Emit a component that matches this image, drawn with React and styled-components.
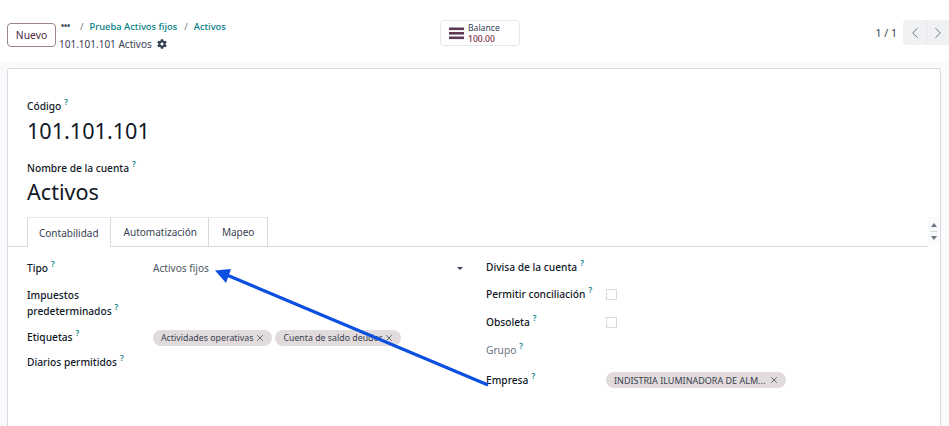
import React from "react";
import styled, { createGlobalStyle } from "styled-components";
import { ChevronLeft, ChevronRight, X } from "lucide-react";
import { FaCog } from "react-icons/fa";

const GlobalStyle = createGlobalStyle`
  html, body {
    margin: 0;
    height: 100%;
    overflow: hidden;
    background: #f9fafb;
    font-family: "Noto Sans", "Open Sans", sans-serif;
    color: #374151;
  }
`;

const Page = styled.div`
  position: relative;
  width: 949px;
  height: 426px;
  overflow: hidden;
`;

const ControlPanel = styled.div`
  height: 62px;
  box-sizing: border-box;
  background: #fff;
  display: grid;
  grid-template-columns: 433px 1fr auto;
  padding-left: 7px;
`;

const LeftSide = styled.div`
  display: flex;
  align-items: flex-start;
  padding-top: 18px;
`;

const NewButton = styled.button`
  width: 49px;
  height: 24px;
  margin-top: 5px;
  padding: 0;
  background: #fff;
  border: 1px solid #9a8494;
  border-radius: 4px;
  color: #4b2a43;
  font: 10.3px "Noto Sans", sans-serif;
`;

const Crumbs = styled.div`
  margin-left: 3px;
  display: flex;
  flex-direction: column;
`;

const CrumbRow = styled.div`
  height: 17px;
  display: flex;
  align-items: center;
  font-size: 9.4px;
  font-weight: 500;
  color: #017e84;
  padding-left: 2px;
`;

const Dots = styled.span`
  color: #374151;
  font-weight: 700;
  font-size: 8px;
  line-height: 1;
  width: 19px;
  margin-top: -2px;
`;

const Slash = styled.span`
  color: #6b7280;
  font-weight: 400;
  margin-right: 6px;
`;

const CrumbLink = styled.span`
  margin-right: 7px;
`;

const CurrentRow = styled.div`
  height: 17px;
  display: flex;
  align-items: center;
  gap: 5px;
  font-size: 10px;
  color: #374151;
`;

const StatWrap = styled.div`
  padding-top: 20px;
`;

const StatButton = styled.div`
  width: 80px;
  height: 26px;
  box-sizing: border-box;
  border: 1px solid #e5e7eb;
  border-radius: 4px;
  display: flex;
  align-items: center;
  padding-left: 8px;
  gap: 4px;
`;

const StatText = styled.div`
  display: flex;
  flex-direction: column;
  padding-top: 1px;
  font-size: 8.6px;
  line-height: 10.5px;
  color: #374151;
`;

const StatValue = styled.span`
  color: #7c2d3f;
  font-weight: 500;
`;

const Pager = styled.div`
  padding-top: 20px;
  display: flex;
  align-items: flex-start;
  font-size: 10.5px;
  color: #374151;
`;

const PagerText = styled.span`
  margin: 6px 6px 0 0;
`;

const PagerButton = styled.div`
  width: ${(p) => p.$w}px;
  height: 25px;
  background: #eff1f3;
  border-left: ${(p) => (p.$split ? "1px solid #e5e7eb" : "0")};
  border-radius: ${(p) => (p.$split ? "0" : "4px 0 0 4px")};
  display: flex;
  align-items: center;
  justify-content: center;
  color: #6b7280;
`;

const Sheet = styled.div`
  box-sizing: border-box;
  margin: 6px 8px 0 7px;
  height: 358px;
  background: #fff;
  border: 1px solid #d8dadd;
  border-bottom: 0;
  border-radius: 3px 3px 0 0;
  padding-top: 29px;
`;

const TitleBlock = styled.div`
  padding: 0 19px;
  height: ${(p) => p.$h}px;
`;

const Label = styled.div`
  font-size: 10.2px;
  line-height: 16px;
  font-weight: ${(p) => (p.$muted ? 400 : 500)};
  color: ${(p) => (p.$muted ? "#6b7280" : "#111827")};
`;

const Help = styled.sup`
  color: #017e84;
  font-size: 8px;
  font-weight: 600;
  line-height: 0;
  margin-left: 3px;
  vertical-align: 5px;
`;

const BigValue = styled.div`
  font-size: 21.6px;
  line-height: 31px;
  margin-top: ${(p) => p.$top || 0}px;
  color: #111827;
`;

const TabBar = styled.div`
  position: relative;
  height: 30px;
  box-sizing: border-box;
  padding-left: 19px;
  display: flex;
  border-bottom: 1px solid #d8dadd;
  margin-right: 12px;
`;

const Tab = styled.div`
  box-sizing: border-box;
  height: ${(p) => (p.$active ? "30px" : "29px")};
  padding: 0 ${(p) => p.$right}px 0 ${(p) => p.$left}px;
  display: flex;
  align-items: center;
  font-size: 10px;
  background: #fff;
  color: #374151;
  border-top: 1px solid #e5e7eb;
  border-right: 1px solid #d8dadd;
  border-left: ${(p) => (p.$active ? "1px solid #d8dadd" : "0")};
`;

const Scroller = styled.div`
  position: absolute;
  right: -11px;
  top: 0;
  width: 11px;
  height: 28px;
  display: flex;
  flex-direction: column;
  align-items: center;
  justify-content: center;
  gap: 4px;
  background: #f9fafb;
`;

const ScrollerRule = styled.span`
  width: 7px;
  height: 1px;
  background: #d8dadd;
`;

const Arrowhead = styled.span`
  width: 0;
  height: 0;
  border-left: 3px solid transparent;
  border-right: 3px solid transparent;
  border-${(p) => (p.$up ? "bottom" : "top")}: 4px solid #6b7280;
`;

const FormGrid = styled.div`
  display: grid;
  grid-template-columns: 459px 1fr;
  padding: 13px 0 0 19px;
`;

const Column = styled.div`
  display: flex;
  flex-direction: column;
  margin-top: ${(p) => p.$top || 0}px;
`;

const Row = styled.div`
  display: grid;
  grid-template-columns: ${(p) => p.$label}px 1fr;
  min-height: ${(p) => p.$h}px;
  align-items: start;
`;

const Select = styled.div`
  width: 312px;
  display: flex;
  justify-content: space-between;
  align-items: center;
  font-size: 10.1px;
  line-height: 16px;
  color: #4b5563;
`;

const Caret = styled.span`
  width: 0;
  height: 0;
  border-left: 3px solid transparent;
  border-right: 3px solid transparent;
  border-top: 3px solid #374151;
  margin-right: 2px;
`;

const Tags = styled.div`
  display: flex;
  gap: 3px;
  margin-top: ${(p) => p.$top}px;
`;

const Tag = styled.span`
  height: 16px;
  padding: 0 ${(p) => (p.$wide ? 7 : 7)}px 0 8px;
  background: #e2dbdb;
  border-radius: 8px;
  display: inline-flex;
  align-items: center;
  gap: ${(p) => (p.$wide ? 4 : 2)}px;
  font-size: ${(p) => (p.$wide ? 9 : 8.8)}px;
  color: #374151;
  white-space: nowrap;
`;

const Checkbox = styled.span`
  display: block;
  width: 9px;
  height: 9px;
  margin-top: 3px;
  border: 1px solid #d8dadd;
`;

const ArrowLayer = styled.svg`
  position: absolute;
  left: 0;
  top: 0;
  pointer-events: none;
`;

const HamburgerIcon = () => (
  <svg width="15" height="13" viewBox="0 0 15 13">
    <rect x="0" y="0.5" width="15" height="2.6" fill="#5f3a58" />
    <rect x="0" y="5" width="15" height="2.6" fill="#5f3a58" />
    <rect x="0" y="9.5" width="15" height="2.6" fill="#5f3a58" />
  </svg>
);

const Field = ({ children, muted }) => (
  <Label $muted={muted}>
    {children}
    <Help>?</Help>
  </Label>
);

const Chip = ({ children, wide }) => (
  <Tag $wide={wide}>
    {children}
    <X size={10} strokeWidth={2} color="#4b5563" />
  </Tag>
);

export default function App() {
  return (
    <Page>
      <GlobalStyle />
      <ControlPanel>
        <LeftSide>
          <NewButton>Nuevo</NewButton>
          <Crumbs>
            <CrumbRow>
              <Dots>•••</Dots>
              <Slash>/</Slash>
              <CrumbLink>Prueba Activos fijos</CrumbLink>
              <Slash>/</Slash>
              <CrumbLink>Activos</CrumbLink>
            </CrumbRow>
            <CurrentRow>
              101.101.101 Activos
              <FaCog size={10} color="#374151" />
            </CurrentRow>
          </Crumbs>
        </LeftSide>
        <StatWrap>
          <StatButton>
            <HamburgerIcon />
            <StatText>
              <span>Balance</span>
              <StatValue>100.00</StatValue>
            </StatText>
          </StatButton>
        </StatWrap>
        <Pager>
          <PagerText>1 / 1</PagerText>
          <PagerButton $w={23}>
            <ChevronLeft size={18} strokeWidth={1.3} />
          </PagerButton>
          <PagerButton $w={22} $split>
            <ChevronRight size={18} strokeWidth={1.3} />
          </PagerButton>
        </Pager>
      </ControlPanel>
      <Sheet>
        <TitleBlock $h={62}>
          <Field>Código</Field>
          <BigValue $top={1}>101.101.101</BigValue>
        </TitleBlock>
        <TitleBlock $h={57}>
          <Field>Nombre de la cuenta</Field>
          <BigValue>Activos</BigValue>
        </TitleBlock>
        <TabBar>
          <Tab $active $left={11} $right={11}>Contabilidad</Tab>
          <Tab $left={13} $right={11}>Automatización</Tab>
          <Tab $left={13} $right={13}>Mapeo</Tab>
          <Scroller>
            <Arrowhead $up />
            <ScrollerRule />
            <Arrowhead />
          </Scroller>
        </TabBar>
        <FormGrid>
          <Column>
            <Row $label={126} $h={27}>
              <Field>Tipo</Field>
              <Select>
                Activos fijos
                <Caret />
              </Select>
            </Row>
            <Row $label={126} $h={42}>
              <Field>Impuestos predeterminados</Field>
            </Row>
            <Row $label={126} $h={25}>
              <Field>Etiquetas</Field>
              <Tags $top={1}>
                <Chip>Actividades operativas</Chip>
                <Chip>Cuenta de saldo deudor</Chip>
              </Tags>
            </Row>
            <Row $label={126} $h={20}>
              <Field>Diarios permitidos</Field>
            </Row>
          </Column>
          <Column $top={-1}>
            <Row $label={120} $h={27}>
              <Field>Divisa de la cuenta</Field>
            </Row>
            <Row $label={120} $h={28}>
              <Field>Permitir conciliación</Field>
              <Checkbox />
            </Row>
            <Row $label={120} $h={28}>
              <Field>Obsoleta</Field>
              <Checkbox />
            </Row>
            <Row $label={120} $h={30}>
              <Field muted>Grupo</Field>
            </Row>
            <Row $label={120} $h={20}>
              <Field>Empresa</Field>
              <Tags $top={0}>
                <Chip wide>INDISTRIA ILUMINADORA DE ALM...</Chip>
              </Tags>
            </Row>
          </Column>
        </FormGrid>
      </Sheet>
      <ArrowLayer width="949" height="426" viewBox="0 0 949 426">
        <line x1="488" y1="385" x2="228" y2="275.5" stroke="#0b4fe0" strokeWidth="3.2" />
        <polygon points="215,270.5 231,269 226,283" fill="#0b4fe0" />
      </ArrowLayer>
    </Page>
  );
}
